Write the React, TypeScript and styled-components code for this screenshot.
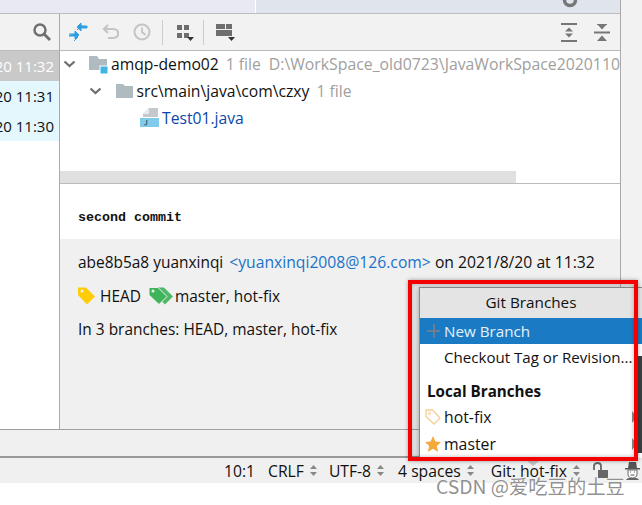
import { FC, PropsWithChildren } from 'react'
import styled, { createGlobalStyle } from 'styled-components'

const UI_FONT = `"Open Sans", "Noto Sans", "Liberation Sans", sans-serif`

const GlobalStyle = createGlobalStyle`
  html, body {
    margin: 0;
    padding: 0;
    background: #fff;
  }
  body {
    font-family: ${UI_FONT};
    font-size: 15.7px;
    color: #111;
  }
`

const Page = styled.div`
  position: relative;
  width: 642px;
  height: 505px;
  overflow: hidden;
  background: #fff;
`

const Upper = styled.div`
  display: flex;
  height: 429px;
  background: #f2f2f2;
  border-bottom: 1px solid #a0a0a0;
`

const Workspace = styled.div`
  width: 620px;
  display: flex;
  flex-direction: column;
  border-right: 1px solid #aaa;
`

const TabStrip = styled.div`
  height: 13px;
  flex: none;
  background: #e0e4ec;
  border-bottom: 1px solid #bdbdbd;
  display: flex;
  padding-right: 42px;
  overflow: hidden;
`

const Tab = styled.div`
  width: 255px;
  background: #e8e9f2;
  border-right: 1px solid #fff;
`

const Columns = styled.div`
  flex: 1;
  display: flex;
  min-height: 0;
`

const LeftPane = styled.div`
  width: 59px;
  flex: none;
  background: #fff;
  border-right: 1px solid #aaa;
`

const Toolbar = styled.div<{ $end?: boolean }>`
  height: 37px;
  box-sizing: border-box;
  display: flex;
  align-items: center;
  justify-content: ${({ $end }) => ($end ? 'flex-end' : 'flex-start')};
  background: #f2f2f2;
  border-bottom: 1px solid #bbb;
  padding: 0 8px;
`

const TimeRow = styled.div<{ $selected?: boolean }>`
  height: 30px;
  display: flex;
  justify-content: flex-end;
  align-items: center;
  overflow: hidden;
  white-space: nowrap;
  padding-right: 5px;
  font-size: 15px;
  background: ${({ $selected }) => ($selected ? '#c9c9c9' : '#e3f7fd')};
  color: ${({ $selected }) => ($selected ? '#fff' : '#111')};
`

const RightPane = styled.div`
  flex: 1;
  min-width: 0;
  display: flex;
  flex-direction: column;
`

const ToolGroup = styled.div`
  flex: 1;
  display: flex;
  align-items: center;
  gap: 14px;
`

const ToolDivider = styled.span<{ $pull?: boolean }>`
  width: 1px;
  height: 25px;
  background: #ccc;
  margin: 0 -3px 0 ${({ $pull }) => ($pull ? -5 : -3)}px;
`

const ToolIcons = styled.div`
  display: flex;
  align-items: center;
  gap: 17px;
  margin-right: 2px;
`

const Tree = styled.div`
  height: 120px;
  background: #fff;
  overflow: hidden;
`

const TreeRow = styled.div<{ $depth: number }>`
  height: 27px;
  display: flex;
  align-items: center;
  white-space: nowrap;
  padding-left: ${({ $depth }) => 3 + $depth * 25.5}px;
  &:first-child {
    height: 26px;
  }
`

const Chevron = styled.svg`
  width: 13px;
  height: 8px;
  flex: none;
  margin-right: 13px;
`

const ChevronSpace = styled.span`
  width: 26px;
  flex: none;
`

const FileName = styled.span<{ $blue?: boolean }>`
  margin-left: 3px;
  color: ${({ $blue }) => ($blue ? '#0b47a8' : '#111')};
`

const Muted = styled.span`
  color: #a0a0a0;
  margin-left: 7px;
`

const PathText = styled(Muted)`
  margin-left: 8px;
  font-size: 15.8px;
`

const ScrollTrack = styled.div`
  height: 12px;
  flex: none;
  background: #fff;
  border-bottom: 1px solid #bbb;
`

const ScrollThumb = styled.div`
  width: 456px;
  height: 12px;
  background: #e0e0e0;
`

const Message = styled.div`
  height: 55px;
  flex: none;
  background: #fff;
  padding: 26px 0 0 18px;
  box-sizing: border-box;
  font-family: "Liberation Mono", monospace;
  font-size: 13.33px;
  font-weight: 700;
  line-height: 16px;
`

const Details = styled.div`
  flex: 1;
  background: #f0f0f0;
  padding: 12px 0 0 18px;
  display: flex;
  flex-direction: column;
  gap: 11.5px;
`

const DetailLine = styled.div<{ $tight?: boolean }>`
  height: 22px;
  display: flex;
  align-items: center;
  white-space: pre;
  font-size: ${({ $tight }) => ($tight ? 15.45 : 15.7)}px;
`

const Author = styled.span`
  font-size: 15.45px;
  margin-right: 2px;
`

const Mail = styled.span`
  color: #1a73c8;
`

const ActionBar = styled.div`
  height: 26px;
  background: #f0f0f0;
  border-bottom: 2px solid #999;
`

const StatusBar = styled.div`
  height: 25px;
  background: #f0f0f0;
  display: flex;
  align-items: center;
  padding-left: 224px;
  white-space: nowrap;
`

const StatusItem = styled.span<{ $gap: number }>`
  display: flex;
  align-items: center;
  margin-right: ${({ $gap }) => $gap}px;
`

const UpDown = styled.svg`
  width: 7px;
  height: 11px;
  margin-left: 6px;
`

const Popup = styled.div`
  position: absolute;
  left: 419px;
  top: 287px;
  right: 0;
  height: 170px;
  background: #fff;
  border-left: 1px solid #888;
  border-top: 1px solid #888;
  box-shadow: -2px 0 5px rgba(0, 0, 0, 0.25);
`

const PopupTitle = styled.div`
  height: 30px;
  box-sizing: border-box;
  display: flex;
  align-items: center;
  justify-content: center;
  padding-bottom: 2px;
  font-size: 15.3px;
  background: #e4e4e4;
`

const MenuRow = styled.div<{ $active?: boolean; $tall?: boolean }>`
  height: ${({ $tall }) => ($tall ? 27 : 26)}px;
  display: flex;
  align-items: center;
  white-space: nowrap;
  padding-left: 5px;
  font-size: ${({ $active }) => ($active ? 15.2 : 15.8)}px;
  background: ${({ $active }) => ($active ? '#1a7bc4' : 'transparent')};
  color: ${({ $active }) => ($active ? '#e6f1fa' : '#111')};
`

const CheckoutLabel = styled.span`
  font-size: 15.1px;
`

const MenuIcon = styled.span`
  width: 19px;
  height: 18px;
  display: flex;
  align-items: center;
  flex: none;
`

const SectionTitle = styled.div`
  height: 33px;
  padding: 8px 0 0 7px;
  box-sizing: border-box;
  display: flex;
  align-items: center;
  font-size: 15.2px;
  font-weight: 700;
`

const SubArrow = styled.span`
  position: absolute;
  right: 5px;
  width: 0;
  height: 0;
  border-left: 5px solid #8a8a8a;
  border-top: 6px solid transparent;
  border-bottom: 6px solid transparent;
`

const NeighbourStrip = styled.div`
  position: absolute;
  left: 638px;
  top: 356px;
  width: 4px;
  height: 97px;
  background: #3c3f41;
`

const Notch = styled.div`
  position: absolute;
  left: 527px;
  top: 461px;
  width: 0;
  height: 0;
  border-left: 6px solid transparent;
  border-right: 6px solid transparent;
  border-top: 5px solid #c4c4c4;
`

const Highlight = styled.div`
  position: absolute;
  left: 408px;
  top: 280px;
  width: 230px;
  height: 181px;
  box-sizing: border-box;
  border: 4px solid #f40000;
  box-shadow: 0 0 4px rgba(0, 0, 0, 0.35), inset 0 0 4px rgba(0, 0, 0, 0.3);
`

const Watermark = styled.div`
  position: absolute;
  left: 436px;
  top: 473px;
  font-family: "Noto Sans CJK SC", sans-serif;
  font-size: 19.3px;
  line-height: 26px;
  color: rgba(125, 125, 125, 0.85);
  white-space: nowrap;
  text-shadow: 0 0 2px #fff;
`

const Gear = styled.svg`
  width: 16px;
  height: 16px;
  margin: -8px 0 0 auto;
  flex: none;
`

const Icon: FC<PropsWithChildren<{ w: number; h: number }>> = ({ w, h, children }) => (
  <svg width={w} height={h} viewBox={`0 0 ${w} ${h}`} style={{ flex: 'none' }}>
    {children}
  </svg>
)

const TreeChevron = () => (
  <Chevron viewBox="0 0 13 8">
    <path d="M1.5 1.5 L6.5 6 L11.5 1.5" fill="none" stroke="#6e6e6e" strokeWidth="2.2" />
  </Chevron>
)

const Arrows = () => (
  <UpDown viewBox="0 0 7 11">
    <path d="M3.5 0 L7 4 H0 Z M3.5 11 L0 7 H7 Z" fill="#888" />
  </UpDown>
)

const Tag: FC<{ color: string; x?: number }> = ({ color, x = 0 }) => (
  <path
    d={`M${x} 1.5 H${x + 8} L${x + 17} 10.5 L${x + 9} 18.5 L${x} 9 Z`}
    fill={color}
  />
)

const ToolbarLeft = () => (
  <ToolGroup>
    <Icon w={20} h={18}>
      <path
        d="M1 11 H7 V8 L11 12 L7 16 V13 M7 11 V13 H1 Z M9 7 L14 2 M19 5 H13 V8 L9 4 L13 0 V3 H19 Z M6 18 L10 14"
        fill="#2f9fe0"
        stroke="#2f9fe0"
        strokeWidth="1"
      />
    </Icon>
    <Icon w={17} h={18}>
      <path d="M2 6 H11 C18 6 18 15 11 15 H6 M6 2 L2 6 L6 10" fill="none" stroke="#c4c4c4" strokeWidth="2.2" />
    </Icon>
    <Icon w={18} h={18}>
      <circle cx="9" cy="9" r="7.5" fill="none" stroke="#c4c4c4" strokeWidth="2" />
      <path d="M9 4.5 V9 L12.5 12" fill="none" stroke="#c4c4c4" strokeWidth="1.8" />
    </Icon>
    <ToolDivider />
    <Icon w={20} h={18}>
      <path d="M3 2 H8 V7 H3 Z M10 2 H15 V7 H10 Z M3 10 H8 V15 H3 Z M10 10 H15 V15 H10 Z" fill="#6e6e6e" />
      <path d="M13 14 H20 L16.5 18 Z" fill="#333" />
    </Icon>
    <ToolDivider $pull />
    <Icon w={20} h={18}>
      <path d="M1 1 H10 V6 H1 Z M11 1 H17 V6 H11 Z M1 7 H17 V13 H1 Z" fill="#6e6e6e" />
      <path d="M13 14 H20 L16.5 18 Z" fill="#333" />
    </Icon>
  </ToolGroup>
)

const ToolbarRight = () => (
  <ToolIcons>
    <Icon w={16} h={19}>
      <path d="M0 0 H16 V2 H0 Z M0 17 H16 V19 H0 Z M8 4.5 L12 8.5 H4 Z M8 14.5 L4 10.5 H12 Z" fill="#777" />
    </Icon>
    <Icon w={16} h={17}>
      <path d="M3 0 H13 L8 5.5 Z M0 7.5 H16 V9.5 H0 Z M8 11.5 L13 17 H3 Z M3 0 H13 V1 H3 Z" fill="#777" />
    </Icon>
  </ToolIcons>
)

const App: FC = () => {
  return (
    <Page>
      <GlobalStyle />
      <Upper>
        <Workspace>
          <TabStrip>
            <Tab />
            <Gear viewBox="0 0 16 16">
              <circle cx="8" cy="8" r="5.5" fill="none" stroke="#777" strokeWidth="3.5" />
            </Gear>
          </TabStrip>
          <Columns>
            <LeftPane>
              <Toolbar $end>
                <Icon w={18} h={18}>
                  <circle cx="7" cy="7" r="5.5" fill="none" stroke="#6e6e6e" strokeWidth="2.4" />
                  <path d="M11 11 L17 17" stroke="#6e6e6e" strokeWidth="2.8" />
                </Icon>
              </Toolbar>
              <TimeRow $selected>2021/8/20 11:32</TimeRow>
              <TimeRow>2021/8/20 11:31</TimeRow>
              <TimeRow>2021/8/20 11:30</TimeRow>
            </LeftPane>
            <RightPane>
              <Toolbar>
                <ToolbarLeft />
                <ToolbarRight />
              </Toolbar>
              <Tree>
                <TreeRow $depth={0}>
                  <TreeChevron />
                  <Icon w={19} h={19}>
                    <path d="M0 1 H8 L10 4 H18 V15 H0 Z" fill="#b0bac1" />
                    <rect x="11" y="11" width="8" height="8" fill="#3fb4e5" stroke="#fff" />
                  </Icon>
                  <FileName>amqp-demo02</FileName>
                  <Muted>1 file</Muted>
                  <PathText>D:\WorkSpace_old0723\JavaWorkSpace2020110</PathText>
                </TreeRow>
                <TreeRow $depth={1}>
                  <TreeChevron />
                  <Icon w={19} h={15}>
                    <path d="M1 1 H8 L10 3 H18 V15 H1 Z" fill="#b0bac1" />
                  </Icon>
                  <FileName>src\main\java\com\czxy</FileName>
                  <Muted>1 file</Muted>
                </TreeRow>
                <TreeRow $depth={2}>
                  <ChevronSpace />
                  <Icon w={19} h={19}>
                    <path d="M9 0 H18 V9 H3 V6 Z" fill="#c4c9cd" />
                    <path d="M9 0 V6 H3 Z" fill="#e8eaec" />
                    <rect x="0" y="10" width="19" height="9" fill="#7fcbe9" />
                    <path d="M6.8 12 V16 C6.8 17.4 4.6 17.4 4.4 16.2" fill="none" stroke="#3c4a55" strokeWidth="1" />
                  </Icon>
                  <FileName $blue>Test01.java</FileName>
                </TreeRow>
              </Tree>
              <ScrollTrack>
                <ScrollThumb />
              </ScrollTrack>
              <Message>second commit</Message>
              <Details>
                <DetailLine>
                  <Author>abe8b5a8 yuanxinqi </Author>
                  <Mail>&lt;yuanxinqi2008@126.com&gt;</Mail> on 2021/8/20 at 11:32
                </DetailLine>
                <DetailLine $tight>
                  <Icon w={22} h={20}>
                    <Tag color="#ffcc0a" />
                    <circle cx="4" cy="5" r="1.5" fill="#f0f0f0" />
                  </Icon>
                  {'HEAD  '}
                  <Icon w={26} h={20}>
                    <Tag color="#4fb868" x={7} />
                    <path d="M0 1.5 H9 L18 10.5 L10 18.5 L0 9 Z" fill="#3fb45a" stroke="#f0f0f0" />
                    <circle cx="4" cy="5" r="1.5" fill="#f0f0f0" />
                  </Icon>
                  master, hot-fix
                </DetailLine>
                <DetailLine $tight>In 3 branches: HEAD, master, hot-fix</DetailLine>
              </Details>
            </RightPane>
          </Columns>
        </Workspace>
      </Upper>
      <ActionBar />
      <StatusBar>
        <StatusItem $gap={13}>10:1</StatusItem>
        <StatusItem $gap={12}>CRLF<Arrows /></StatusItem>
        <StatusItem $gap={14}>UTF-8<Arrows /></StatusItem>
        <StatusItem $gap={17}>4 spaces<Arrows /></StatusItem>
        <StatusItem $gap={13}>Git: hot-fix<Arrows /></StatusItem>
        <StatusItem $gap={16}>
          <Icon w={15} h={17}>
            <path d="M1 8 V4 C1 0 8 0 8 4 V8" fill="none" stroke="#666" strokeWidth="1.8" />
            <rect x="5" y="8" width="10" height="8" fill="#666" />
          </Icon>
        </StatusItem>
        <StatusItem $gap={0}>
          <Icon w={17} h={18}>
            <path d="M4 6 L5 0 H12 L13 6 H16 V7.5 H1 V6 Z" fill="#555" />
            <path d="M4 8 H13 V12 C13 15 11 16 8.5 16 C6 16 4 15 4 12 Z" fill="#fff" stroke="#666" />
            <path d="M6 10 H7 M10 10 H11 M6.5 13 H10.5" stroke="#555" />
            <path d="M2 18 C3 16 5 16 6 16 H11 C12 16 14 16 15 18 Z" fill="#666" />
          </Icon>
        </StatusItem>
      </StatusBar>
      <Popup>
        <PopupTitle>Git Branches</PopupTitle>
        <MenuRow $active>
          <MenuIcon>
            <Icon w={15} h={14}>
              <path d="M8 0 H10 V6 H15 V8 H10 V14 H8 V8 H2 V6 H8 Z" fill="#6d7f8c" />
            </Icon>
          </MenuIcon>
          New Branch
        </MenuRow>
        <MenuRow>
          <MenuIcon />
          <CheckoutLabel>Checkout Tag or Revision...</CheckoutLabel>
        </MenuRow>
        <SectionTitle>Local Branches</SectionTitle>
        <MenuRow $tall>
          <MenuIcon>
            <Icon w={16} h={16}>
              <path d="M1 1 H7.5 L15 9 L9 15 L1 7.5 Z" fill="none" stroke="#f3cf95" strokeWidth="1.3" />
              <circle cx="4.5" cy="4.5" r="1.2" fill="none" stroke="#f3cf95" />
            </Icon>
          </MenuIcon>
          hot-fix
          <SubArrow />
        </MenuRow>
        <MenuRow $tall>
          <MenuIcon>
            <Icon w={16} h={16}>
              <path d="M8 0 L10.4 5.6 L16 6.1 L11.8 9.9 L13.2 16 L8 12.7 L2.8 16 L4.2 9.9 L0 6.1 L5.6 5.6 Z" fill="#f5a93a" />
            </Icon>
          </MenuIcon>
          master
          <SubArrow />
        </MenuRow>
      </Popup>
      <NeighbourStrip />
      <Notch />
      <Highlight />
      <Watermark>CSDN @爱吃豆的土豆</Watermark>
    </Page>
  )
}

export default App
